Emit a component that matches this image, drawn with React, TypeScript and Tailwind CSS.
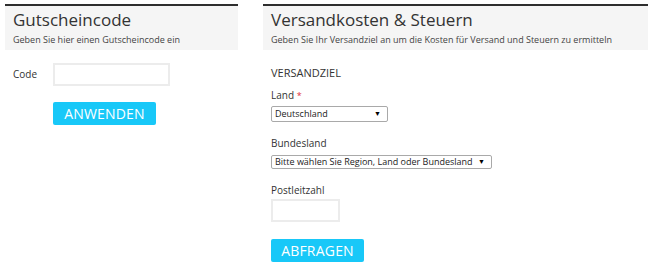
import React from "react";

const font = { fontFamily: '"Open Sans", "Noto Sans", sans-serif' };

const Header: React.FC<{ title: string; sub: string }> = ({ title, sub }) => (
	<div className="border-t-2 border-[#2e2e2e] bg-[#f5f5f5] h-[46px] pl-2 pt-[3px]">
		<div className="text-[17px] leading-[22px] text-[#333]">{title}</div>
		<div className="text-[9px] leading-[14px] text-[#444] mt-[2px]">{sub}</div>
	</div>
);

const FakeSelect: React.FC<{ value: string; className: string }> = ({ value, className }) => (
	<div className={`flex items-center justify-between border border-[#a9a9a9] rounded-[2px] bg-white pl-[3px] pr-[6px] text-[9px] text-[#222] ${className}`}>
		<span>{value}</span>
		<span className="text-[7px] text-black">▼</span>
	</div>
);

export default function App() {
	return (
		<div className="w-[650px] h-[269px] bg-white flex pt-[4px] pl-[5px] gap-[25px]" style={font}>
			<div className="w-[233px] shrink-0">
				<Header title="Gutscheincode" sub="Geben Sie hier einen Gutscheincode ein" />
				<div className="flex items-center mt-[13px] pl-2">
					<span className="text-[10px] text-[#333] w-[40px]">Code</span>
					<div className="w-[117px] h-[23px] border-2 border-[#ececec] bg-white" />
				</div>
				<button className="ml-[48px] mt-[16px] w-[103px] h-[23px] rounded-[2px] bg-[#18c8f8] text-white text-[14px] font-medium tracking-[0.2px] flex items-center justify-center">
					ANWENDEN
				</button>
			</div>
			<div className="w-[385px] shrink-0">
				<Header title="Versandkosten & Steuern" sub="Geben Sie Ihr Versandziel an um die Kosten für Versand und Steuern zu ermitteln" />
				<div className="pl-2">
					<div className="text-[11px] text-[#333] mt-[16px] leading-[14px]">VERSANDZIEL</div>
					<div className="text-[10px] text-[#333] mt-[8px] leading-[14px]">
						Land <span className="text-[#e0303a] text-[9px]">*</span>
					</div>
					<FakeSelect value="Deutschland" className="w-[117px] h-[16px] mt-[3px]" />
					<div className="text-[10px] text-[#333] mt-[14px] leading-[14px]">Bundesland</div>
					<FakeSelect value="Bitte wählen Sie Region, Land oder Bundesland" className="w-[221px] h-[14px] mt-[5px]" />
					<div className="text-[10px] text-[#333] mt-[14px] leading-[14px]">Postleitzahl</div>
					<div className="w-[69px] h-[23px] border-2 border-[#ececec] bg-white mt-[2px]" />
					<button className="mt-[17px] w-[93px] h-[23px] rounded-[2px] bg-[#18c8f8] text-white text-[14px] font-medium tracking-[0.2px] flex items-center justify-center">
						ABFRAGEN
					</button>
				</div>
			</div>
		</div>
	);
}
